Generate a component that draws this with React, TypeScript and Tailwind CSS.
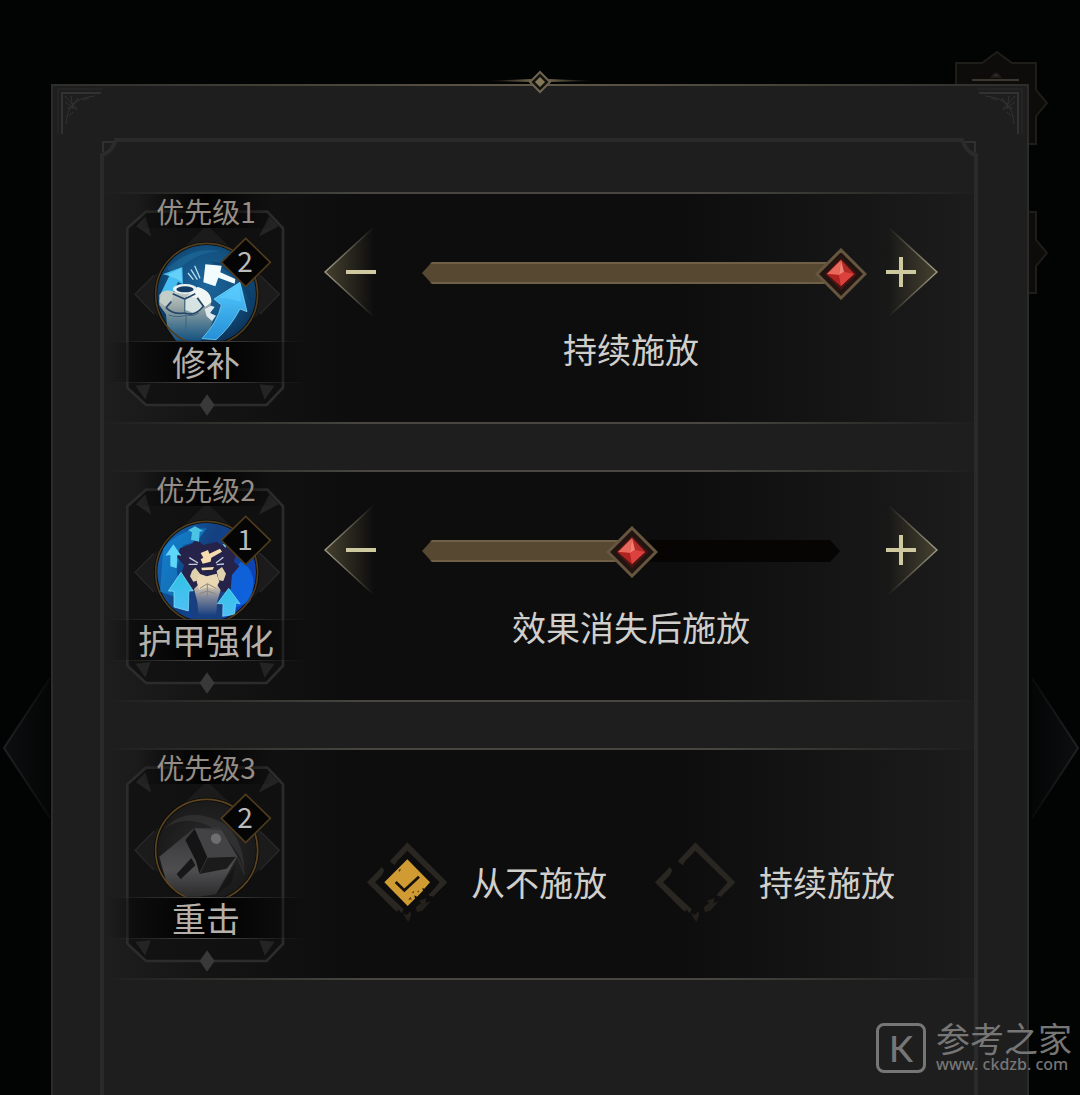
import { useState, type ReactNode } from "react";

const MODES = ["从不施放", "效果消失后施放", "持续施放"];

function RepairArt() {
  return (
    <g>
      <circle cx="290" cy="328" r="148" fill="url(#repairSky)" />
      <path d="M170 250 Q250 180 330 200 Q250 200 190 270Z" fill="#2f86b4" opacity=".3" />
      <path d="M300 230 Q380 230 420 300 L430 380 Q400 270 300 230Z" fill="#0c3f6b" opacity=".7" />
      <path d="M158 268 L217 246 L219 298 L204 290 L190 322 L150 330 L178 272Z" fill="#45bdf2" />
      <path d="M170 270 L214 249 L216 290 L202 283Z" fill="#7bdcfb" opacity=".6" />
      <path d="M148 330 Q165 310 192 320 L256 322 L262 306 Q300 315 303 350 L300 380 L312 398 L296 440 L270 470 L200 470 L172 430 L168 388 L148 360Z" fill="url(#stone)" />
      <path d="M230 336 L262 306 Q306 318 304 352 L285 366 L262 340Z" fill="#f0f6f4" />
      <path d="M228 338 L258 338 L280 368 L258 388 L226 374Z" fill="#d6e3e3" />
      <path d="M155 322 Q170 312 190 322 L188 340 L168 366 L148 350Z" fill="#c4cec8" />
      <path d="M188 326 L224 342 L256 326 M168 368 Q190 390 224 384 Q256 396 280 364 M262 338 L282 366 M184 350 L168 368" fill="none" stroke="#24476a" strokeWidth="5" />
      <path d="M224 342 V384 M176 390 Q205 400 228 390 Q250 396 266 384 M228 390 V448" stroke="#3b6580" strokeWidth="3" fill="none" />
      <ellipse cx="225" cy="312" rx="36" ry="15" fill="#e9f3f1" />
      <ellipse cx="225" cy="313" rx="26" ry="9" fill="#143c63" />
      <path d="M284 372 L304 362 L314 366 L300 384 L318 392 L306 408 L290 394Z" fill="#dceaf0" />
      <path d="M286 238 L335 242 L331 262 L376 282 L374 296 L325 278 L316 304 L280 292Z" fill="#f2fbfd" />
      <path d="M234 264 L250 284 M254 242 L270 280 M243 254 L262 284" stroke="#b6dcec" strokeWidth="4" />
      <path d="M390 292 L411 380 L390 372 Q362 426 318 464 L276 461 Q322 412 334 360 L312 342Z" fill="url(#beam)" stroke="#8be2ff" strokeWidth="2" />
      <path d="M386 300 L394 350 L350 340 L326 340Z" fill="#62d0ff" opacity=".5" />
    </g>
  );
}

function ArmorArt() {
  return (
    <g transform="translate(0 6)">
      <circle cx="290" cy="322" r="148" fill="url(#armorSky)" />
      <path d="M160 250 Q210 190 290 190 L260 230 L220 240 L200 310 L210 400 L150 380Z" fill="#1592dd" opacity=".55" />
      <path d="M392 290 Q450 320 420 410 L370 430 L352 340Z" fill="#1172f0" opacity=".65" />
      <path d="M210 250 L246 236 L258 222 L280 240 L320 230 L340 242 L380 262 L372 290 L388 304 L366 330 L362 372 L340 400 L240 400 L222 372 L212 340 L222 300 L200 276Z" fill="#26234b" />
      <path d="M238 380 H350 L340 462 H244Z" fill="#183f80" />
      <path d="M234 196 L255 184 L280 198 L269 200 L267 230 L243 224 L246 202Z" fill="#4bc4e4" />
      <path d="M190 238 L214 272 L202 270 L200 310 L181 304 L181 270 L166 272Z" fill="#5fd5f7" />
      <path d="M252 372 L264 360 L322 360 L332 376 L322 408 L318 452 L266 452 L262 410Z" fill="url(#armorBody)" />
      <path d="M246 318 L256 308 L270 326 L266 346 L250 350 L240 334Z M320 318 L336 306 L348 326 L340 348 L326 346Z" fill="#dfd1ae" />
      <path d="M268 326 L290 334 L320 326 L328 350 L316 372 L292 366 L268 374 L260 350Z" fill="#e8d7b2" />
      <path d="M270 370 L292 356 L318 370 M292 357 V398 M268 386 L292 378 L316 386" stroke="#8b8582" strokeWidth="3" fill="none" />
      <path d="M238 278 L264 294 M236 298 L262 298 M318 294 L340 277 M320 299 L342 297" stroke="#c5cce2" strokeWidth="4" />
      <path d="M264 304 L318 302 L314 318 L270 320Z" fill="#262445" />
      <path d="M274 308 L312 306 L308 314 L276 316Z" fill="#f3dfb3" />
      <path d="M272 264 L294 255 L298 266 L330 251 L336 260 L304 278 L302 290 L278 296 L272 283 L280 278Z" fill="#f6ddb0" />
      <path d="M213 322 L250 378 L237 378 L235 438 L192 426 L192 379 L175 378Z" fill="url(#armorArrow)" stroke="#8ceaff" strokeWidth="2" />
      <path d="M356 370 L390 416 L377 414 L374 448 L338 454 L339 416 L322 416Z" fill="url(#armorArrow)" stroke="#7fe2ff" strokeWidth="2" />
      <path d="M338 238 L352 236 L346 248Z" fill="#7fd7ef" />
    </g>
  );
}

function SmashArt() {
  return (
    <g transform="translate(0 -3)">
      <circle cx="290" cy="331" r="148" fill="url(#smashSky)" />
      <path d="M160 270 Q230 190 340 250 Q400 290 404 400 L390 350 Q330 250 240 242 Q190 242 160 270Z" fill="#4a4a4b" opacity=".35" />
      <path d="M148 350 L250 266 L330 262 L382 350 L318 462 L236 476 L170 430Z" fill="url(#smashStone)" />
      <path d="M254 264 L336 272 L378 348 L292 352Z" fill="#434345" />
      <path d="M226 300 L254 267 L292 352 L268 400 L258 364Z" fill="#141415" />
      <path d="M268 402 L293 353 L378 350 L350 386Z" fill="#1b1b1c" />
      <path d="M200 402 L244 354 L256 376 L212 418Z" fill="#171718" />
      <path d="M320 462 L378 372 L364 430Z" fill="#161617" />
      <ellipse cx="318" cy="296" rx="15" ry="16" fill="#6e6e70" transform="rotate(-35 318 296)" />
      <path d="M382 350 L404 404" stroke="#2c2c2d" strokeWidth="5" fill="none" />
    </g>
  );
}

function ArtDefs() {
  return (
    <svg className="absolute size-0" aria-hidden="true">
      <defs>
        <radialGradient id="repairSky" cx=".5" cy=".4" r=".6">
          <stop offset="0" stopColor="#1d659c" />
          <stop offset=".6" stopColor="#12507f" />
          <stop offset="1" stopColor="#0b3157" />
        </radialGradient>
        <linearGradient id="stone" x1="0" y1="0" x2="0" y2="1">
          <stop offset="0" stopColor="#d0d8d3" />
          <stop offset=".4" stopColor="#93a2a2" />
          <stop offset=".7" stopColor="#4c7791" />
          <stop offset="1" stopColor="#12507f" />
        </linearGradient>
        <linearGradient id="beam" x1="0" y1="0" x2="0" y2="1">
          <stop offset="0" stopColor="#55cbff" />
          <stop offset="1" stopColor="#258fd6" />
        </linearGradient>
        <linearGradient id="armorSky" x1="0" y1="0" x2="1" y2=".5">
          <stop offset="0" stopColor="#0d6fc4" />
          <stop offset=".5" stopColor="#14407f" />
          <stop offset="1" stopColor="#0d43b8" />
        </linearGradient>
        <linearGradient id="armorBody" x1="0" y1="0" x2="0" y2="1">
          <stop offset="0" stopColor="#d9cdb2" />
          <stop offset=".4" stopColor="#7f8799" />
          <stop offset="1" stopColor="#183f80" />
        </linearGradient>
        <linearGradient id="armorArrow" x1="0" y1="0" x2="0" y2="1">
          <stop offset="0" stopColor="#2fc3e4" />
          <stop offset="1" stopColor="#4fbff5" />
        </linearGradient>
        <radialGradient id="smashSky">
          <stop offset="0" stopColor="#2c2c2d" />
          <stop offset="1" stopColor="#1a1a1b" />
        </radialGradient>
        <linearGradient id="smashStone" x1="0" y1="0" x2="0" y2="1">
          <stop offset="0" stopColor="#363638" />
          <stop offset=".6" stopColor="#4e4e50" />
          <stop offset="1" stopColor="#2a2a2b" />
        </linearGradient>
        <linearGradient id="arrowLine" x1="0" x2="1">
          <stop offset="0" stopColor="#a09b83" />
          <stop offset="1" stopColor="#a09b83" stopOpacity="0" />
        </linearGradient>
        <linearGradient id="arrowFill" x1="0" x2="1">
          <stop offset="0" stopColor="#45402f" />
          <stop offset="1" stopColor="#45402f" stopOpacity="0" />
        </linearGradient>
        <linearGradient id="edgeLine" x1="0" x2="1">
          <stop offset="0" stopColor="#1e2122" />
          <stop offset="1" stopColor="#1e2122" stopOpacity=".2" />
        </linearGradient>
        <linearGradient id="edgeFill" x1="0" x2="1">
          <stop offset="0" stopColor="#0c0f10" />
          <stop offset="1" stopColor="#040505" />
        </linearGradient>
        <linearGradient id="goldLeft" x1="0" x2="1">
          <stop offset="0" stopColor="#6d6248" stopOpacity="0" />
          <stop offset="1" stopColor="#6d6248" />
        </linearGradient>
        <clipPath id="medallion">
          <rect x="100" y="150" width="400" height="317" />
        </clipPath>
      </defs>
    </svg>
  );
}

function SkillCard({ rank, level, name, dim, children }: { rank: number; level: number; name: string; dim?: boolean; children: ReactNode }) {
  return (
    <div className="relative ml-0.5 flex h-full w-[200px] shrink-0 flex-col items-center pt-0.5">
      <svg viewBox="-12 21 600 696" className="absolute inset-0 h-full w-full" aria-hidden="true">
        <path d="M108 80 H472 L519 130 V608 L470 660 H108 L52 608 V130Z" fill="#101010" fillOpacity=".75" stroke="#2c2c2d" strokeWidth="8" />
        <path d="M78 124 L106 94 L124 155Z M506 124 L478 94 L446 155 Z M76 602 L122 598 L106 644Z M494 602 L448 598 L464 644Z" fill="#242425" />
        <path d="M291 120 L508 328 L291 536 L75 328Z" fill="#1b1b1c" />
        <path d="M132 271 L75 328 L132 387 M450 271 L508 328 L450 387" fill="none" stroke="#29292a" strokeWidth="4" />
        <path d="M291 628 L314 660 L291 692 L269 660Z" fill="#39393a" />
        <g clipPath="url(#medallion)">
          <circle cx="290" cy="328" r="158" fill="#0b0a08" />
          {children}
          <circle cx="290" cy="328" r="153" fill="none" stroke={dim ? "#5c4520" : "#4f3d21"} strokeWidth="5" />
        </g>
        <path d="M407 160 L481 232 L407 305 L334 232Z" fill="#050505" stroke="#4f3b1d" strokeWidth="5" />
      </svg>
      <p className="relative flex h-[34px] w-[136px] items-center justify-center bg-linear-to-r from-transparent via-black/90 to-transparent text-[28px] leading-8 whitespace-nowrap text-[#968e86]">
        优先级{rank}
      </p>
      <div className="relative h-[113px] w-full">
        <span className="absolute top-3 left-[119px] w-10 text-center text-[28px] leading-10 text-[#bcbcbc]">{level}</span>
      </div>
      <h2 className="relative flex h-[42px] w-full items-center justify-center bg-linear-to-r from-transparent via-black to-transparent text-[34px] leading-10 whitespace-nowrap text-[#b4b1ac]">
        <span className="absolute inset-x-0 top-0 h-px bg-linear-to-r from-transparent via-[#4e4c48] to-transparent" />
        {name}
        <span className="absolute inset-x-0 bottom-0 h-px bg-linear-to-r from-transparent via-[#4e4c48] to-transparent" />
      </h2>
    </div>
  );
}

function SkillRow({ card, children }: { card: ReactNode; children: ReactNode }) {
  return (
    <section className="relative flex h-[232px] bg-[linear-gradient(90deg,#1e1e1e,#141414_12%,#0d0d0d_28%,#0d0d0d_66%,#1c1c1c)]">
      <span className="absolute inset-x-0 top-0 h-0.5 bg-[linear-gradient(90deg,#1e1e1e,#48463f_30%,#48463f_70%,#1e1e1e)]" />
      <span className="absolute inset-x-0 bottom-0 h-0.5 bg-[linear-gradient(90deg,#1e1e1e,#48463f_30%,#48463f_70%,#1e1e1e)]" />
      {card}
      <div className="relative mr-9 ml-[18px] flex min-w-0 flex-1 flex-col items-center pt-[35px]">{children}</div>
    </section>
  );
}

function StepButton({ plus, label, onClick }: { plus?: boolean; label: string; onClick: () => void }) {
  return (
    <button type="button" aria-label={label} onClick={onClick} className="h-[90px] w-[54px] shrink-0 cursor-pointer">
      <svg viewBox="0 0 54 90" className="h-full w-full" aria-hidden="true">
        <g transform={plus ? "translate(54 0) scale(-1 1)" : undefined}>
          <path d="M1 45 L50 0 V90Z" fill="url(#arrowFill)" />
          <path d="M50 0 L1 45 L50 90" fill="none" stroke="url(#arrowLine)" strokeWidth="1.5" />
        </g>
        {plus ? <path d="M2 45 H32 M17 30 V60" stroke="#cfc9a0" strokeWidth="4" /> : <path d="M22 45 H52" stroke="#cfc9a0" strokeWidth="4" />}
      </svg>
    </button>
  );
}

function Gem() {
  return (
    <svg viewBox="0 0 52 52" className="h-13 w-13" aria-hidden="true">
      <path d="M26 2 L50 26 L26 50 L2 26Z" fill="#211411" stroke="#66563f" strokeWidth="3" />
      <path d="M26 10 L42 26 L26 42 L10 26Z" fill="#4b1512" />
      <path d="M26 12 L39 26 L26 38 L12 26Z" fill="#c9302b" />
      <path d="M26 12 L12 26 L24 27Z" fill="#e8685c" />
      <path d="M26 12 L39 26 L29 24Z" fill="#b02c28" />
      <path d="M12 26 L24 27 L26 38Z" fill="#b12320" />
      <path d="M26 12 L29 24 L24 27Z" fill="#f08074" />
      <path d="M24 27 L29 24 L39 26 L26 38Z" fill="#dc423d" />
    </svg>
  );
}

function SliderControl({ name, initial }: { name: string; initial: number }) {
  const [value, setValue] = useState(initial);
  const percent = `${value * 50}%`;
  return (
    <>
      <div className="flex w-full items-center gap-11">
        <StepButton label={`${name} −`} onClick={() => setValue(Math.max(0, value - 1))} />
        <div className="relative h-13 flex-1">
          <div className="absolute inset-x-0 top-4 h-[22px] bg-[#070504] [clip-path:polygon(10px_0,calc(100%-10px)_0,100%_50%,calc(100%-10px)_100%,10px_100%,0_50%)]">
            <div className="h-full border-y-2 border-[#6f5f46] bg-[#574832]" style={{ width: percent }} />
          </div>
          <div className="absolute top-0.5 ml-px -translate-x-1/2" style={{ left: percent }}>
            <Gem />
          </div>
          <input
            type="range"
            min={0}
            max={2}
            value={value}
            aria-label={name}
            aria-valuetext={MODES[value]}
            onChange={(e) => setValue(Number(e.target.value))}
            className="absolute inset-0 h-full w-full cursor-pointer opacity-0"
          />
        </div>
        <StepButton plus label={`${name} +`} onClick={() => setValue(Math.min(2, value + 1))} />
      </div>
      <output className="mt-2.5 text-[34px] leading-11 text-[#d0cfcc]">{MODES[value]}</output>
    </>
  );
}

function ChoiceControl() {
  const [choice, setChoice] = useState("从不施放");
  return (
    <fieldset className="mt-[59px] flex gap-12">
      {["从不施放", "持续施放"].map((option) => (
        <label key={option} className="flex cursor-pointer items-center gap-6 text-[34px] leading-11 whitespace-nowrap text-[#d0cfcc]">
          <input type="radio" name="smash" value={option} checked={choice === option} onChange={() => setChoice(option)} className="sr-only" />
          <svg viewBox="56 66 240 240" className="size-20" aria-hidden="true">
            <path d="M177 67 L297 187 L254 230 L240 226 L274 187 L177 92 L146 124 L140 136 L124 124Z" fill="#2a2622" />
            <path d="M56 187 L100 142 L108 150 L102 164 L80 187 L166 268 L160 280 L150 268 L146 276 L133 264Z" fill="#2a2622" />
            <path d="M164 276 L174 286 L186 274 L188 288 L180 306 L170 292Z M202 262 L218 250 L212 242 L234 234 L232 250 L248 242 L222 272 L206 276Z" fill="#24211d" />
            {choice === option && (
              <g>
                <path d="M177 118 L245 187 L228 206 L222 204 L224 212 L206 230 L198 226 L200 236 L190 246 L178 258 L108 187Z" fill="#cf9b32" />
                <path d="M142 186 L168 211 L212 170" fill="none" stroke="#17130a" strokeWidth="8" />
                <path d="M190 218 L198 212 L195 220Z M180 240 L186 230 L192 242 L188 238Z M206 216 L212 211 L211 217Z M150 150 L158 146 L154 156Z" fill="#4c3a16" />
              </g>
            )}
          </svg>
          {option}
        </label>
      ))}
    </fieldset>
  );
}

function PanelCorner({ className }: { className: string }) {
  return (
    <svg viewBox="0 0 54 54" className={className} fill="none" stroke="#323232" aria-hidden="true">
      <path d="M5 50 V5 H50" stroke="#2a2a2a" />
      <path d="M9 50 V9 H48" strokeWidth="2" />
      <path d="M13 40 Q14 26 20 20 Q28 13 42 12 M12 12 L24 26 M18 12 L20 24 L12 18 M14 24 L24 24 M25 14 L20 22 M16 32 L20 28 M30 16 L36 14" />
    </svg>
  );
}

function FrameCorner({ className }: { className: string }) {
  return (
    <svg viewBox="0 0 20 20" className={className} aria-hidden="true">
      <path d="M0 0 H20 L2 20 H0Z" fill="#1e1e1e" />
      <path d="M2 20 V17 Q11 15 16 2 H20" fill="none" stroke="#2b2b2c" strokeWidth="4" />
      <path d="M3 14 V4 H13" fill="none" stroke="#303031" strokeWidth="2" />
    </svg>
  );
}

function EdgeArrow({ className }: { className: string }) {
  return (
    <svg viewBox="0 0 48 140" className={className} aria-hidden="true">
      <path d="M2 70 L48 0 V140Z" fill="url(#edgeFill)" />
      <path d="M48 0 L2 70 L48 140" fill="none" stroke="url(#edgeLine)" strokeWidth="2" />
    </svg>
  );
}

function SideTabs() {
  return (
    <svg viewBox="0 0 96 244" className="absolute top-[50px] right-8 h-[244px] w-24" fill="#0d0c0a" stroke="#1f1d19" strokeWidth="2" aria-hidden="true">
      <path d="M4 94 V13 H30 L45 2 L60 13 H84 V40 L95 53 L84 66 V94Z" />
      <path d="M20 30 H67" stroke="#3a3831" />
      <path d="M40 27 Q44 20 48 27Z" fill="#3a3831" />
      <path d="M60 162 H84 V190 L95 203 L84 216 V243 H60" />
    </svg>
  );
}

function Watermark() {
  return (
    <div className="absolute right-2 bottom-[21px] flex items-center gap-2.5 text-[#767676]">
      <span className="flex size-[50px] items-center justify-center rounded-lg border-3 border-[#767676] font-['Lato'] text-4xl leading-none font-medium">K</span>
      <div className="flex flex-col">
        <span className="text-[34px] leading-8 whitespace-nowrap">参考之家</span>
        <span className="font-['Noto_Sans'] text-base leading-5 font-medium whitespace-nowrap">www. ckdzb. com</span>
      </div>
    </div>
  );
}

export default function App() {
  return (
    <div className="relative flex min-h-screen flex-col overflow-hidden bg-[#020303] px-[51px] pt-[84px] font-['Noto_Sans_CJK_SC',sans-serif]">
      <ArtDefs />
      <SideTabs />
      <EdgeArrow className="absolute top-[678px] left-0.5 h-[140px] w-12" />
      <EdgeArrow className="absolute top-[678px] right-0 h-[140px] w-12 -scale-x-100" />

      <main className="relative flex flex-1 flex-col border-x-2 border-[#2b2b2b] bg-[#1e1e1e] pt-[54px] pr-[49px] pl-[47px]">
        <span className="absolute inset-x-0 top-0 h-0.5 bg-linear-to-r from-[#2e2d2b] via-[#5f5847] to-[#2e2d2b]" />
        <svg viewBox="0 0 110 24" className="absolute -top-3.5 left-1/2 h-6 w-[110px] -translate-x-1/2" aria-hidden="true">
          <path d="M0 11 L46 9 V12Z" fill="url(#goldLeft)" />
          <path d="M0 11 L46 9 V12Z" fill="url(#goldLeft)" transform="translate(110 0) scale(-1 1)" />
          <path d="M55 2 L65 12 L55 22 L45 12Z" fill="#15130f" stroke="#6e644f" strokeWidth="2" />
          <path d="M55 7 L60 12 L55 17 L50 12Z" fill="#857859" />
        </svg>
        <PanelCorner className="absolute top-0 left-0 size-[54px]" />
        <PanelCorner className="absolute top-0 right-0 size-[54px] -scale-x-100" />

        <div className="relative flex flex-1 flex-col gap-[46px] border-x-4 border-t-4 border-[#2a2a2b] pt-[50px] pb-28">
          <FrameCorner className="absolute -top-1 -left-1 size-5" />
          <FrameCorner className="absolute -top-1 -right-1 size-5 -scale-x-100" />
          <SkillRow card={<SkillCard rank={1} level={2} name="修补"><RepairArt /></SkillCard>}>
            <SliderControl name="修补" initial={2} />
          </SkillRow>
          <SkillRow card={<SkillCard rank={2} level={1} name="护甲强化"><ArmorArt /></SkillCard>}>
            <SliderControl name="护甲强化" initial={1} />
          </SkillRow>
          <SkillRow card={<SkillCard rank={3} level={2} name="重击" dim><SmashArt /></SkillCard>}>
            <ChoiceControl />
          </SkillRow>
        </div>
      </main>
      <Watermark />
    </div>
  );
}
